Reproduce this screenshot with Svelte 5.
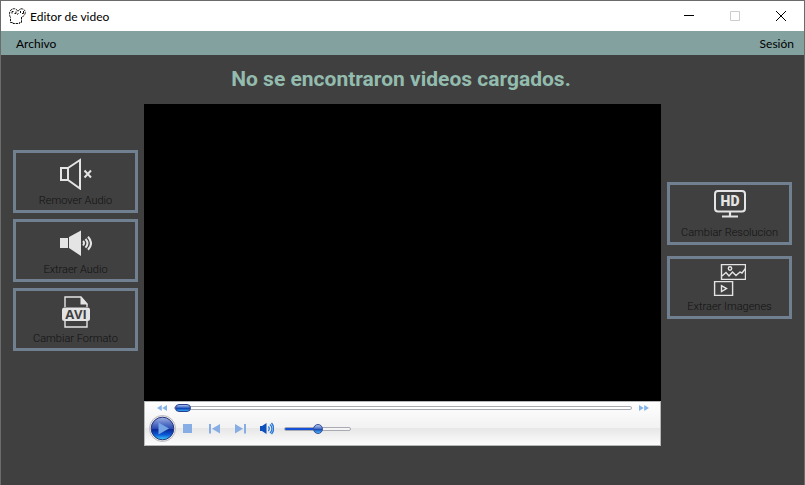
<script>
  let seek = $state(0);
  let volume = $state(50);
</script>

{#snippet tool(label, icon)}
  <button class="tool" type="button">
    <svg class="tool-icon" viewBox="0 0 33 32" aria-hidden="true">{@render icon()}</svg>
    <span>{label}</span>
  </button>
{/snippet}

{#snippet muteIcon()}
  <g fill="none" stroke="#e4e4e4" stroke-width="2">
    <path d="M2 10h7v12H2zM9 10L21 2v28.500L9 22" />
    <path d="M25.500 12.500l6.500 7M32 12.500l-6.500 7" />
  </g>
{/snippet}

{#snippet soundIcon()}
  <path d="M1 11h8v10H1zM10 10L22 3.500v25.500L10 21z" fill="#e4e4e4" />
  <g fill="none" stroke="#e4e4e4" stroke-width="2">
    <path d="M24 14q2 2 0 4.500M26.500 12q4 4.300 0 8.700M29 9.800q6 6.500 0 13" />
  </g>
{/snippet}

{#snippet aviIcon()}
  <path d="M6 11V1h16l6 7v3M6 25v6h22v-6" fill="none" stroke="#e4e4e4" stroke-width="1.400" />
  <path d="M21.500 0.500v8H29z" fill="#e4e4e4" />
  <rect x="3" y="11.500" width="28" height="13.500" rx="2.500" fill="#e4e4e4" />
  <text x="17" y="23" text-anchor="middle" class="avi">AVI</text>
{/snippet}

{#snippet hdIcon()}
  <rect x="2" y="1" width="30" height="20.500" rx="3" fill="none" stroke="#e4e4e4" stroke-width="2" />
  <path d="M17 21v5M9 26.500h16" stroke="#e4e4e4" stroke-width="2.200" />
  <text x="17" y="16" text-anchor="middle" class="hd">HD</text>
{/snippet}

{#snippet imagesIcon()}
  <g fill="none" stroke="#e4e4e4" stroke-width="1.400">
    <path d="M8.500 0.600h24v14.800h-24zM1.600 17.600h18v13.800h-18z" />
    <path d="M9 12l4-3.500 3 3.500 3.500-4 3.500 3.500 4-3.500 2 1 3.500-4.500" />
    <circle cx="17" cy="4.500" r="1.700" />
    <path d="M8.500 21.700v5.800l5-2.900z" />
  </g>
{/snippet}

<div class="window">
  <header class="titlebar">
    <svg class="app-icon" viewBox="0 0 17 17" aria-hidden="true">
      <g fill="none" stroke="#111" stroke-width="1">
        <path d="M1.500 9.500Q0 7 .8 4 2 .8 5 .7q2.500 0 4 2.800Q10.500.6 13 .8q3.300.8 3.300 3.700-.3 3.500-3.800 4.500v5.500h-2v1H4v-1H1.500z" stroke-dasharray="2.500 0.800" />
        <path d="M3 5.500v-2h1.500M5.500 5.500h1.500v-2M11.500 3v2M13 5.500h1.500V3M8 6.500l1.500-1" />
      </g>
    </svg>
    <span class="title">Editor de video</span>
    <div class="window-buttons">
      <button type="button" aria-label="Minimizar">
        <svg viewBox="0 0 12 12"><path d="M1 5.500h10" /></svg>
      </button>
      <button type="button" aria-label="Maximizar" disabled>
        <svg viewBox="0 0 12 12"><path d="M1.500 1.500h9v9h-9z" /></svg>
      </button>
      <button type="button" aria-label="Cerrar">
        <svg viewBox="0 0 12 12"><path d="M1 1l10 10M11 1L1 11" /></svg>
      </button>
    </div>
  </header>

  <nav class="menubar">
    <button type="button">Archivo</button>
    <button type="button">Sesión</button>
  </nav>

  <main>
    <h1>No se encontraron videos cargados.</h1>
    <div class="workspace">
      <div class="tools left">
        {@render tool('Remover Audio', muteIcon)}
        {@render tool('Extraer Audio', soundIcon)}
        {@render tool('Cambiar Formato', aviIcon)}
      </div>

      <section class="player" aria-label="Reproductor">
        <div class="screen"></div>
        <div class="controls">
          <div class="seek-row">
            <button class="flat skip" type="button" aria-label="Retroceder">
              <svg viewBox="0 0 10 8"><path d="M4.800 1v6L0 4zM10 1v6L5.200 4z" fill="#86b4e8" /></svg>
            </button>
            <input class="seek" type="range" min="0" max="100" bind:value={seek} aria-label="Posición" />
            <button class="flat skip" type="button" aria-label="Avanzar">
              <svg viewBox="0 0 10 8"><path d="M0 1v6l4.800-3zM5.200 1v6L10 4z" fill="#86b4e8" /></svg>
            </button>
          </div>
          <div class="transport">
            <button class="flat play" type="button" aria-label="Reproducir">
              <svg viewBox="0 0 27 27">
                <defs>
                  <linearGradient id="ball" x1="0" y1="0" x2="0" y2="1">
                    <stop offset="0" stop-color="#a3b1e0" />
                    <stop offset=".3" stop-color="#5672c6" />
                    <stop offset=".5" stop-color="#2c4bb0" />
                    <stop offset=".55" stop-color="#0a2796" />
                    <stop offset=".78" stop-color="#0b5ad8" />
                    <stop offset="1" stop-color="#3ed4fa" />
                  </linearGradient>
                </defs>
                <circle cx="13.500" cy="13.500" r="13" fill="#e9e9ec" stroke="#b9b9bf" />
                <circle cx="13.500" cy="13.500" r="11.300" fill="url(#ball)" stroke="#24347c" />
                <path d="M9.500 7.500v12l10.500-6z" fill="#76a5e6" />
              </svg>
            </button>
            <div class="group">
              <button class="flat" type="button" aria-label="Detener">
                <svg viewBox="0 0 16 16"><path d="M3 3h9v9H3z" fill="#86aee4" /></svg>
              </button>
              <button class="flat" type="button" aria-label="Anterior">
                <svg viewBox="0 0 16 16"><path d="M3 3h2v9.500H3zM14 3v9.500L6 7.700z" fill="#86aee4" /></svg>
              </button>
              <button class="flat" type="button" aria-label="Siguiente">
                <svg viewBox="0 0 16 16"><path d="M12 3h2v9.500h-2zM3 3v9.500l8-4.800z" fill="#86aee4" /></svg>
              </button>
              <button class="flat" type="button" aria-label="Silenciar">
                <svg viewBox="0 0 16 16">
                  <path d="M2 5h2L8.500 2v11L4 10H2z" fill="#0c50bd" />
                  <path d="M10.300 5.500q2 2 0 4.500M12 3.500q4 4 0 8.500M13.500 2q4.500 5.500 0 11" fill="none" stroke="#2877d8" stroke-width="1.300" />
                </svg>
              </button>
              <input
                class="volume"
                type="range"
                min="0"
                max="100"
                bind:value={volume}
                style="--level: {volume}%"
                aria-label="Volumen"
              />
            </div>
          </div>
        </div>
      </section>

      <div class="tools right">
        {@render tool('Cambiar Resolucion', hdIcon)}
        {@render tool('Extraer Imagenes', imagesIcon)}
      </div>
    </div>
  </main>
</div>

<style>
  :global(body) {
    margin: 0;
    background: #404040;
  }
  .window {
    box-sizing: border-box;
    min-height: 100vh;
    border: 1px solid #6b6b6b;
    border-bottom: 0;
    background: #404040;
    font-family: Lato, 'Open Sans', sans-serif;
    font-size: 12px;
    color: #000;
  }
  button {
    margin: 0;
    padding: 0;
    border: 0;
    background: none;
    font: inherit;
    color: inherit;
  }
  svg {
    display: block;
  }
  .titlebar {
    display: flex;
    align-items: center;
    height: 30px;
    padding-left: 8px;
    background: #fff;
  }
  .app-icon {
    width: 17px;
    height: 17px;
    margin-right: 4px;
  }
  .window-buttons {
    display: flex;
    margin-left: auto;
  }
  .window-buttons button {
    display: grid;
    place-items: center;
    width: 46px;
    height: 30px;
  }
  .window-buttons svg {
    width: 12px;
    height: 12px;
    fill: none;
    stroke: #000;
    stroke-width: 1;
  }
  .window-buttons button:disabled svg {
    stroke: #ccc;
  }
  .menubar {
    display: flex;
    justify-content: space-between;
    align-items: center;
    height: 24px;
    padding: 0 10px 0 15px;
    background: #82a19f;
  }
  h1 {
    margin: 0;
    padding: 11px 3px 12px 0;
    font: 700 21px/26px Roboto, sans-serif;
    text-align: center;
    color: #93bcae;
  }
  .workspace {
    display: grid;
    grid-template-columns: 125px minmax(0, 1fr) 125px;
    gap: 6px;
    padding: 0 12px;
  }
  .tools {
    display: flex;
    flex-direction: column;
    justify-content: center;
    padding-bottom: 49px;
  }
  .left {
    gap: 6px;
  }
  .right {
    gap: 11px;
  }
  .tool {
    display: flex;
    flex-direction: column;
    align-items: center;
    gap: 3px;
    padding: 5px 2px 1px 0;
    border: 3px solid #708090;
    font: 300 11px/16px Roboto, sans-serif;
    color: #111;
  }
  .tool {
    padding: 5px 0 1px;
  }
  .tool-icon {
    width: 33px;
    height: 32px;
  }
  .avi {
    font: 700 13px 'Open Sans', sans-serif;
    fill: #404040;
  }
  .hd {
    font: 900 14px Roboto, sans-serif;
    fill: #e4e4e4;
  }
  .screen {
    aspect-ratio: 517 / 297;
    background: #000;
  }
  .controls {
    box-sizing: border-box;
    border: 1px solid #b4b8b8;
    background: linear-gradient(#fff, #f2f2f2 60%, #e6e6e6 60%, #fdfdfd);
  }
  .flat {
    width: 16px;
    height: 16px;
  }
  .seek-row {
    display: flex;
    align-items: center;
    gap: 7px;
    height: 12px;
    padding: 0 11px 0 12px;
  }
  .skip {
    width: 10px;
    height: 8px;
  }
  input {
    appearance: none;
    margin: 0;
    background: none;
  }
  .seek {
    flex: 1;
    min-width: 0;
    height: 10px;
  }
  .seek::-webkit-slider-runnable-track {
    box-sizing: border-box;
    height: 4px;
    border: 1px solid #a9abb3;
    border-radius: 2px;
    background: #fff;
  }
  .seek::-webkit-slider-thumb {
    appearance: none;
    box-sizing: border-box;
    width: 16px;
    height: 8px;
    margin-top: -3px;
    border: 1px solid #263f8c;
    border-radius: 4px;
    background: linear-gradient(#a9bfe8, #3563c4 45%, #0b35a8 50%, #2fa4f4);
  }
  .transport {
    display: flex;
    align-items: center;
    gap: 4px;
    padding: 1px 4px 3px;
  }
  .play {
    width: 27px;
    height: 27px;
  }
  .group {
    display: flex;
    align-items: center;
    gap: 10px;
  }
  .volume {
    width: 67px;
    height: 12px;
  }
  .volume::-webkit-slider-runnable-track {
    box-sizing: border-box;
    height: 4px;
    border: 1px solid #a9abb3;
    border-radius: 2px;
    background: linear-gradient(90deg, #1450d8 var(--level), #f4f4f4 var(--level));
  }
  .volume::-webkit-slider-thumb {
    appearance: none;
    box-sizing: border-box;
    width: 10px;
    height: 10px;
    margin-top: -4px;
    border: 1px solid #35509c;
    border-radius: 50%;
    background: linear-gradient(#b9c8ea, #4a70c8 45%, #1440ac 50%, #48b8f8);
  }
</style>
